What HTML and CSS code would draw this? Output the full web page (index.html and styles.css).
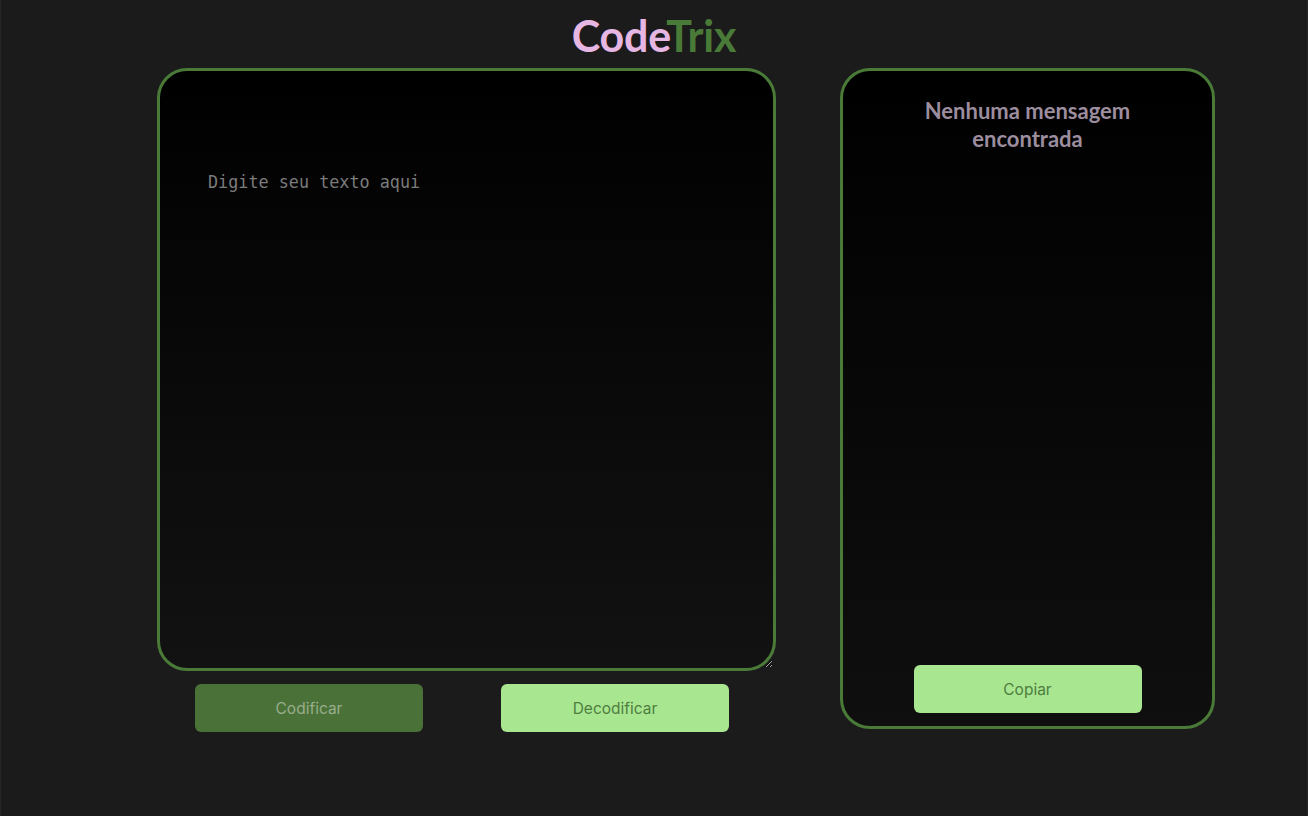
FILE: index.html
```html
<!DOCTYPE html>
<html lang="pt-BR">
<head>
<meta charset="utf-8">
<title>CodeTrix</title>
<link rel="stylesheet" href="styles.css">
</head>
<body>
  <header class="header">
    <h1 class="logo"><span class="logo-code">Code</span><span class="logo-trix">Trix</span></h1>
  </header>
  <main class="main">
    <section class="editor">
      <textarea class="input" placeholder="Digite seu texto aqui"></textarea>
      <div class="actions">
        <button class="btn btn-dark">Codificar</button>
        <button class="btn btn-light">Decodificar</button>
      </div>
    </section>
    <aside class="output">
      <h2 class="output-title">Nenhuma mensagem encontrada</h2>
      <button class="btn btn-light">Copiar</button>
    </aside>
  </main>
</body>
</html>
```

FILE: styles.css
```css
* { box-sizing: border-box; }
html, body { margin: 0; height: 100%; }
body {
  background: #1b1b1b;
  font-family: Inter, "Noto Sans", sans-serif;
  border-left: 1px solid #262626;
  border-right: 1px solid #262626;
}
.header {
  display: flex;
  justify-content: center;
  padding-top: 12px;
  height: 68px;
}
.logo {
  margin: 0;
  font-family: Lato, "Open Sans", sans-serif;
  font-weight: 700;
  font-size: 43px;
  line-height: 48px;
  letter-spacing: -0.2px;
}
.logo-code { color: #e5b7e2; }
.logo-trix { color: #4a7a37; }
.main {
  display: flex;
  align-items: flex-start;
  padding-left: 156px;
  gap: 64px;
}
.editor {
  display: flex;
  flex-direction: column;
  width: 619px;
}
.input {
  display: block;
  width: 619px;
  height: 603px;
  border: 3px solid #4a7a37;
  border-radius: 30px;
  background: linear-gradient(180deg, #000 0%, #121212 100%);
  color: #ccc;
  padding: 101px 48px 40px;
  font-family: "DejaVu Sans Mono", monospace;
  font-size: 16.8px;
  outline: none;
}
.input::placeholder { color: #7b7b7b; }
.actions {
  display: flex;
  padding-left: 38px;
  gap: 78px;
  margin-top: 13px;
}
.btn {
  width: 228px;
  height: 48px;
  border: none;
  border-radius: 6px;
  font-family: Inter, "Noto Sans", sans-serif;
  font-size: 15.5px;
  cursor: pointer;
}
.btn-dark { background: #4a7238; color: #98ad8c; }
.btn-light { background: #a8e690; color: #4f7d40; }
.output {
  width: 375px;
  height: 661px;
  border: 3px solid #4a7a37;
  border-radius: 30px;
  background: linear-gradient(180deg, #000 0%, #0f0f0f 100%);
  display: flex;
  flex-direction: column;
  align-items: center;
  justify-content: space-between;
  padding: 26px 20px 13px;
}
.output-title {
  margin: 0;
  width: 240px;
  text-align: center;
  font-family: Lato, "Open Sans", sans-serif;
  font-weight: 700;
  font-size: 22px;
  line-height: 28px;
  color: #9c8d9f;
}
```
